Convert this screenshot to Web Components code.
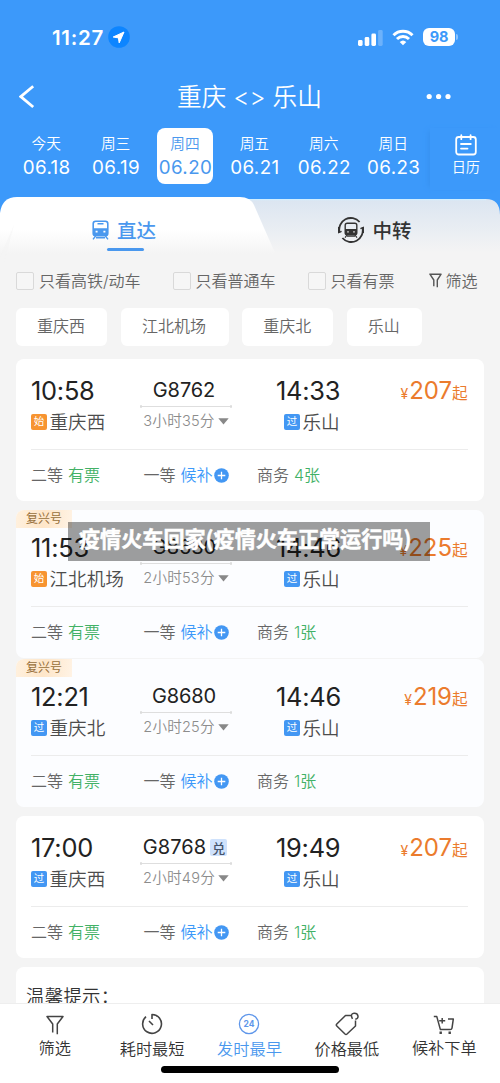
<!DOCTYPE html>
<html lang="zh-CN">
<head>
<meta charset="utf-8">
<title>重庆 - 乐山</title>
<style>
html,body{margin:0;height:100%}
body{font-family:Inter,"Noto Sans CJK SC",sans-serif;background:#f4f4f4;color:#333}
</style>
</head>
<body>
<train-app></train-app>
<script>
const define = (name, css, html) => customElements.define(name, class extends HTMLElement {
  connectedCallback() {
    if (this.shadowRoot) return;
    const t = document.createElement('template');
    t.innerHTML = `<style>*{box-sizing:border-box}:host{display:block;box-sizing:border-box;white-space:nowrap}svg{display:block;flex:none}${css}</style>` +
      (typeof html === 'function' ? html(k => this.getAttribute(k) || '', this) : html);
    this.attachShadow({mode: 'open'}).append(t.content.cloneNode(true));
  }
});

define('status-bar', `
:host{display:flex;height:62px;padding:12px 42px 0 52px;align-items:center;color:#fff}
.t{font-size:20.5px;font-weight:600;line-height:26px;width:52px;padding-top:1px;letter-spacing:.7px}
.loc{margin-left:4px}.sp{flex:1}.wifi{margin:0 9px 0 9px}
.bat{width:32px;height:18px;border-radius:6px;background:#fff;color:#3c99fa;font-size:14.5px;font-weight:700;line-height:18px;text-align:center;letter-spacing:-.2px}
.nub{width:2px;height:6px;border-radius:0 2px 2px 0;background:#8cc3fc;margin-left:1px}`, `
<span class="t">11:27</span>
<svg class="loc" width="22" height="22" viewBox="0 0 22 22"><circle cx="11" cy="11" r="10.8" fill="#0d85ff"/><path d="M16 6 5.2 11l5.2.9.8 5z" fill="#fff" stroke="#fff" stroke-width="1" stroke-linejoin="round"/></svg>
<span class="sp"></span>
<svg width="25" height="17" viewBox="0 0 25 17" fill="#fff"><rect x="0" y="11" width="4.6" height="6" rx="1.4"/><rect x="6.7" y="8" width="4.6" height="9" rx="1.4"/><rect x="13.4" y="4.5" width="4.6" height="12.5" rx="1.4"/><rect x="20.1" y="1" width="4.6" height="16" rx="1.4" opacity=".25"/></svg>
<svg class="wifi" width="22" height="17" viewBox="0 0 22 17" fill="none" stroke="#fff" stroke-width="3"><path d="M1.5 6.2a13.6 13.6 0 0 1 19 0"/><path d="M5 10a8.6 8.6 0 0 1 12 0"/><path d="M11 16.3 7.7 13a4.8 4.8 0 0 1 6.6 0z" fill="#fff" stroke="none"/></svg>
<span class="bat">98</span><span class="nub"></span>`);

define('nav-bar', `
:host{display:grid;grid-template-columns:100px 1fr 100px;height:66px;align-items:center;color:#fff;padding-top:4px}
.back{margin-left:19px}.title{text-align:center;font-size:24.7px;font-weight:350;line-height:36px;padding-right:1px}
.more{margin-left:26px}`, `
<svg class="back" width="16" height="24" viewBox="0 0 16 24" fill="none" stroke="#fff" stroke-width="2.8"><path d="M14.2 1.2 1.8 11.6l12.4 10.4"/></svg>
<span class="title"><slot></slot></span>
<svg class="more" width="26" height="8" viewBox="0 0 26 8" fill="#fff"><circle cx="3.2" cy="3.5" r="2.6"/><circle cx="12.6" cy="3.5" r="2.6"/><circle cx="22" cy="3.5" r="2.6"/></svg>`);

define('date-item', `
:host{width:69.4px;display:flex;justify-content:center;color:#fff}
.b{width:56px;height:56px;border-radius:8px;text-align:center;padding-top:4px;font-weight:350}
:host([on]) .b{background:#fff;color:#4a98ee}
.w{font-size:14.7px;line-height:24px}.d{font-size:18.8px;line-height:23px;font-weight:400;letter-spacing:.4px;margin:0 -5px 0 -4px}`,
a => `<div class="b"><div class="w">${a('week')}</div><div class="d">${a('date')}</div></div>`);

define('date-strip', `
:host{display:flex;height:69px;padding-left:11.5px}
.cal{width:70px;margin-left:2px;color:#fff;display:flex;flex-direction:column;align-items:center;padding:6px 0 0 2px;font-size:14.2px;line-height:22px;font-weight:350;box-shadow:-4px 0 5px -3px #3790ee;height:62px}`, `
<date-item week="今天" date="06.18"></date-item><date-item week="周三" date="06.19"></date-item><date-item on week="周四" date="06.20"></date-item><date-item week="周五" date="06.21"></date-item><date-item week="周六" date="06.22"></date-item><date-item week="周日" date="06.23"></date-item>
<div class="cal"><svg width="22" height="22" viewBox="0 0 22 22" fill="none" stroke="#fff" stroke-width="1.8" stroke-linecap="round"><rect x="1.2" y="3" width="19.6" height="17.5" rx="2.5"/><path d="M6.3 1.2v4M15.6 1.2v4M6 10h9.8M6 14.6h6.5"/></svg>日历</div>`);

define('trip-tabs', `
:host{display:grid;grid-template-columns:250px 250px;height:65px;background:#3c99fa;position:relative}
.bg{position:absolute;inset:0}
.tab{position:relative;display:flex;align-items:center;justify-content:center;font-size:19.5px;line-height:28px;font-weight:500;height:66px}
.l{color:#4a98ee;padding-right:2px}.r{color:#333;padding-right:0}
.tab span{padding-top:1px}
.l svg{margin-right:8px}.r svg{margin-right:8px}
.l::after{content:"";position:absolute;left:107px;top:50.5px;width:37px;height:3.5px;border-radius:2px;background:#4a98ee}`, `
<svg class="bg" width="500" height="65" viewBox="0 0 500 65"><defs><linearGradient id="a" x2="0" y2="1"><stop stop-color="#dbe5f1"/><stop offset=".85" stop-color="#f4f4f4"/></linearGradient><linearGradient id="b" x2="0" y2="1"><stop offset=".5" stop-color="#fff"/><stop offset=".88" stop-color="#f4f4f4"/></linearGradient></defs>
<path d="M0 65V30H230V2H486q14 0 14 16V65z" fill="url(#a)"/><path d="M240 2.6H486" stroke="#d2efff" stroke-width="1.2"/>
<path d="M0 65V16Q2 0 17 0H240q10 0 14 8L279 65z" fill="url(#b)"/><path d="M0 65V60L14 28 4 65z" fill="#f4f4f4" opacity=".5"/></svg>
<div class="tab l"><svg width="17" height="20" viewBox="0 0 17 20" fill="none" stroke="#4a98ee"><rect x="1.2" y="1.2" width="14.6" height="14.6" rx="2.5" stroke-width="1.6"/><path d="M1 8.2h15v5.5q0 2-2 2H3q-2 0-2-2z" fill="#4a98ee" stroke="none"/><path d="M3.6 11.7h2M11.4 11.7h2" stroke="#fff" stroke-width="1.8"/><path d="M5.5 3.8h6M3.6 16l-2.6 3.4M13.4 16l2.6 3.4M4 17.8h9" stroke-width="1.4"/></svg><span>直达</span></div>
<div class="tab r"><svg width="26" height="26" viewBox="0 0 26 26" fill="none" stroke="#333"><path d="M1.6 15.5A11.6 11.6 0 0 1 21.6 5M24.4 10.5A11.6 11.6 0 0 1 4.4 21" stroke-width="1.8"/><path d="M.6 10v5.6l3-1.2M25.4 16v-5.6l-3 1.2" stroke-width="1.4"/><rect x="7.2" y="6.2" width="11.6" height="11.6" rx="2" stroke-width="1.4"/><path d="M7 12h12v4q0 2-2 2H9q-2 0-2-2z" fill="#333" stroke="none"/><path d="M9.3 14.8h1.4M15.3 14.8h1.4" stroke="#fff" stroke-width="1.3"/><path d="m9 18-2 2.7M17 18l2 2.7M9 19.2h8" stroke-width="1.2"/></svg><span>中转</span></div>`);

define('check-option', `
:host{display:flex;align-items:center;font-size:16px;line-height:24px;color:#666;font-weight:350}
i{width:18px;height:18px;border:1px solid #d9d9d9;border-radius:2px;margin-right:5px;background:#f6f6f6}`, `<i></i><slot></slot>`);

define('filter-row', `
:host{display:flex;height:38px;align-items:center;padding:0 0 0 16px;color:#555}
.b{margin-left:32px}.c{margin-left:32px}
.f{margin-left:34px;display:flex;align-items:center;font-size:16px;line-height:24px;color:#666;font-weight:350}.f svg{margin:-1px 4px 0 0}`, `
<check-option>只看高铁/动车</check-option><check-option class="b">只看普通车</check-option><check-option class="c">只看有票</check-option>
<div class="f"><svg width="13" height="15" viewBox="0 0 13 15" fill="none" stroke="#555" stroke-width="1.4" stroke-linejoin="round"><path d="M4.8 13.2V7L.9 1.2h11.2L8.3 7v7.3"/></svg>筛选</div>`);

define('station-chip', `
:host{height:38px;border-radius:6px;background:#fff;font-size:16px;font-weight:350;line-height:37px;text-align:center;color:#666;padding-right:1px}`, `<slot></slot>`);

define('station-chips', `
:host{display:grid;grid-template-columns:91px 108px 91px 75px;gap:13.6px;padding:8px 16px 0;height:59px;align-items:start}`, `
<station-chip>重庆西</station-chip><station-chip>江北机场</station-chip><station-chip>重庆北</station-chip><station-chip>乐山</station-chip>`);

define('station-name', `
:host{display:flex;align-items:center;height:28px;font-size:18.6px;line-height:26px;font-weight:350;color:#4c4c4c}
i{font-style:normal;font-weight:400;width:16px;height:16px;line-height:15px;font-size:10.5px;text-align:center;color:#fff;background:#4397f3;border-radius:2px;margin:-1px 2.5px 0 0}
i.s{background:#f79431}`, a => `<i class="${a('tag') === '始' ? 's' : ''}">${a('tag')}</i><slot></slot>`);

define('seat-info', `
:host{display:flex;align-items:center;font-size:16px;font-weight:350;line-height:24px;color:#666}
b{font-weight:350;margin-left:5px;color:#42b166}b.w{color:#3c99fa}svg{margin-left:1.5px}`, a => `<slot></slot>` + (a('left') ?
 `<b>${a('left')}</b>` : `<b class="w">候补</b><svg width="15" height="15" viewBox="0 0 15 15"><circle cx="7.5" cy="7.5" r="7.3" fill="#4397f3"/><path d="M3.7 7.5h7.6M7.5 3.7v7.6" stroke="#fff" stroke-width="1.3"/></svg>`));

define('train-card', `
:host{height:141.6px;background:#fff;border-radius:8px;padding:16px 15px 0;position:relative}
:host([fx]){height:148px;padding-top:22.5px;background:#fcfdff}
.tag{position:absolute;left:0;top:0;width:56px;height:18.5px;border-radius:8px 0 0 0;background:linear-gradient(100deg,#fff1df,#fee6c9 50%,#fff3e5);font-size:12px;line-height:18px;color:#97703b;text-align:center}
.g{display:grid;grid-template-columns:108px 94px 43px 1fr auto;height:61px}
.time{font-size:25.4px;line-height:31px;letter-spacing:-.25px;font-weight:400;color:#222;height:33px}
.mid{text-align:center}.no{height:31px;display:flex;justify-content:center;align-items:center;font-size:20px;line-height:30px;letter-spacing:-.1px;font-weight:400;color:#222;padding:0 4px 1px 0}
:host([dui]) .no{letter-spacing:.1px;padding-right:2px}
.no em{font:500 13px/17px "Noto Sans CJK SC",sans-serif;letter-spacing:0;width:17px;height:17px;background:#cfe2fc;color:#45536b;border-radius:2px;margin-left:4px}
.ln{height:1px;background:#dedede;margin:0 1px;position:relative;display:block}
.ln::before,.ln::after{content:"";position:absolute;top:-1px;left:0;width:2px;height:3px;border-radius:1px;background:#dcdcdc}.ln::after{left:auto;right:0}
.du{display:flex;align-items:center;justify-content:center;font-size:14.6px;line-height:20px;margin-top:4px;font-weight:350;color:#8c8c8c;letter-spacing:.2px}
.du svg{margin:1px 0 0 3px}
.to station-name{margin-left:8px}
.pr{color:#eb7b2d;display:flex;align-items:baseline;height:33px;font-size:15.6px;line-height:31px;font-weight:400;padding-right:1.5px}
.pr b{font-weight:400;font-size:24px;letter-spacing:-.1px}.pr small{font-size:14px;margin-right:1px}
.hr{height:1px;background:#ececec;margin:13px 1px 0 0}
.s{display:grid;grid-template-columns:112.5px 113.5px 1fr;padding-top:13px}`, (a, el) => `
${el.hasAttribute('fx') ? '<div class="tag">复兴号</div>' : ''}
<div class="g"><div><div class="time">${a('dep')}</div><station-name tag="${a('ftag')}">${a('from')}</station-name></div>
<div class="mid"><div class="no">${a('no')}${el.hasAttribute('dui') ? '<em>兑</em>' : ''}</div><i class="ln"></i><div class="du">${a('dur')}<svg width="11" height="7" viewBox="0 0 11 7"><path d="M.3.3h10.4L5.5 6.6z" fill="#888"/></svg></div></div><span></span>
<div class="to"><div class="time">${a('arr')}</div><station-name tag="过">乐山</station-name></div>
<div class="pr"><small>¥</small><b>${a('price')}</b>起</div></div>
<div class="hr"></div>
<div class="s"><seat-info left="有票">二等</seat-info><seat-info>一等</seat-info><seat-info left="${a('biz')}">商务</seat-info></div>`);

define('train-list', `
:host{display:flex;flex-direction:column;padding:0 16px;flex:1;min-height:0;overflow:hidden}
train-card{flex:none;margin-bottom:9.4px}train-card.near{margin-bottom:1px}
.tip{flex:none;height:120px;border-radius:8px;background:#fff;padding:15px 10px;font-size:18.4px;line-height:28px;font-weight:350;letter-spacing:.3px}`, `
<train-card dep="10:58" ftag="始" from="重庆西" no="G8762" dur="3小时35分" arr="14:33" price="207" biz="4张"></train-card>
<train-card class="near" fx dep="11:53" ftag="始" from="江北机场" no="G8680" dur="2小时53分" arr="14:46" price="225" biz="1张"></train-card>
<train-card fx dep="12:21" ftag="过" from="重庆北" no="G8680" dur="2小时25分" arr="14:46" price="219" biz="1张"></train-card>
<train-card dui dep="17:00" ftag="过" from="重庆西" no="G8768" dur="2小时49分" arr="19:49" price="207" biz="1张"></train-card>
<div class="tip">温馨提示：</div>`);

define('sort-item', `
:host{display:flex;flex-direction:column;align-items:center;font-size:16.2px;line-height:24px;color:#333;font-weight:350}
:host([on]){color:#4a98ee}.i{height:26px;display:flex;align-items:center}.t{margin-top:-1px}:host([low]) .t{margin-top:.5px}`, `<div class="i"><slot name="icon"></slot></div><div class="t"><slot></slot></div>`);

define('bottom-bar', `
:host{height:80px;background:#fff;border-top:1.5px solid #eee;padding:6.5px 6px 0}
.g{display:grid;grid-template-columns:repeat(5,97.4px);height:51.5px}
.home{width:178px;height:7px;border-radius:4px;background:#000;margin:4px auto 0 155px}
.g svg{fill:none;stroke:#444;stroke-width:1.5;stroke-linejoin:round}`, `
<div class="g">
<sort-item><svg slot="icon" width="18" height="20" viewBox="0 0 18 20" style="margin-top:3px"><path d="M6.7 17.5V9L1 1.5h16L11.3 9v10.3"/></svg>筛选</sort-item>
<sort-item low><svg slot="icon" width="22" height="22" viewBox="0 0 22 22"><path d="M11 6V1.5a9.4 9.4 0 1 1-6 2.2M8 8l4 4" stroke-width="1.6"/></svg>耗时最短</sort-item>
<sort-item on low><svg slot="icon" width="22" height="22" viewBox="0 0 22 22"><circle cx="11" cy="11" r="9.6" style="stroke:#5e96ea;stroke-width:1.3"/><text x="11" y="14" text-anchor="middle" font-family="Inter" font-size="8.5" font-weight="700" style="fill:#5e96ea;stroke:none">24</text></svg>发时最早</sort-item>
<sort-item low><svg slot="icon" width="24" height="24" viewBox="0 0 24 24"><path d="M16.5 3.5 10.5 3.5 1.8 12q-1 1 0 2l8.2 8q1 .9 2 0L20.5 14V8.5M17.5 6.8Q14.8 1.7 19 1.3q3.5-.2 4 2.8.2 2.5-2.7 3.2"/></svg>价格最低</sort-item>
<sort-item><svg slot="icon" width="22" height="20" viewBox="0 0 22 20" style="margin-top:3px"><path d="M.8 1.6h3l3.6 13h9.8q1.5 0 1.8-1.5l1.3-9h-5.3M6.2 5.8h6M9.2 3v5.6"/><path d="M6.5 17.8h2.4M15.5 17.8h2.4" style="stroke-width:2.4"/></svg>候补下单</sort-item>
</div><div class="home"></div>`);

define('title-banner', `
:host{position:absolute;left:68px;top:522px;width:362px;height:38.5px;background:rgba(0,0,0,.38);color:#fff;font-size:21.1px;line-height:33px;font-weight:700;padding-left:11px;-webkit-text-stroke:.5px #fff;font-family:"Noto Sans CJK SC",sans-serif}`, `<slot></slot>`);

define('train-app', `
:host{display:flex;flex-direction:column;height:1083px;width:500px;overflow:hidden;position:relative;background:#f4f4f4}
header{background:#3c99fa;height:197px;flex:none}`, `
<header><status-bar></status-bar><nav-bar>重庆 &lt;&gt; 乐山</nav-bar><date-strip></date-strip></header>
<trip-tabs></trip-tabs><filter-row></filter-row><station-chips></station-chips>
<train-list></train-list><bottom-bar></bottom-bar>
<title-banner>疫情火车回家(疫情火车正常运行吗)</title-banner>`);
</script>
</body>
</html>
